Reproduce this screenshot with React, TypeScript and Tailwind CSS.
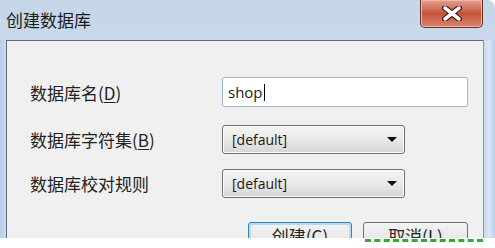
import React from 'react';

const cjk = '"Noto Sans CJK SC", "Noto Sans", sans-serif';
const latin = '"Open Sans", "Noto Sans", sans-serif';

const Label: React.FC<{ text: string; accel?: string }> = ({ text, accel }) => (
  <div className="w-[192px] text-[17px] leading-none text-[#222]" style={{ fontFamily: cjk }}>
    {text}
    {accel && (
      <span>
        (<span className="underline underline-offset-2">{accel}</span>)
      </span>
    )}
  </div>
);

const Combo: React.FC = () => (
  <div className="relative flex h-[29px] w-[183px] items-center rounded-[3px] border border-[#707070] bg-gradient-to-b from-[#f4f4f4] via-[#e9e9e9] to-[#d5d5d5] pl-[9px] shadow-[inset_0_0_0_1px_#fbfbfb]">
    <span className="text-[14px] text-[#1a1a1a]" style={{ fontFamily: latin }}>[default]</span>
    <svg className="absolute right-[7px] top-[11px]" width="10" height="6" viewBox="0 0 10 6">
      <path d="M0 0 L10 0 L5 5 Z" fill="#111" />
    </svg>
  </div>
);

export default function App() {
  return (
    <div className="h-[248px] w-[495px] overflow-hidden bg-white">
      <div className="flex h-[238px] flex-col overflow-hidden rounded-tr-[8px] bg-gradient-to-b from-[#c5d6e9] via-[#d3e0ee] to-[#bfd3e9]">
        {/* title bar */}
        <div className="flex h-[40px] shrink-0 items-start">
          <div className="flex-1 pl-[6px] pt-[10px] text-[17px] leading-[20px] text-[#1b1b1b]" style={{ fontFamily: cjk }}>
            创建数据库
          </div>
          <div className="mr-[12px] flex h-[28px] w-[63px] items-center justify-center rounded-b-[5px] border border-t-0 border-[#6b2c22] bg-gradient-to-b from-[#e3a293] via-[#c6523a] to-[#d68470] shadow-[inset_0_0_0_1px_#efb8a8]">
            <svg width="20" height="15" viewBox="0 0 20 15">
              <path d="M3 2 L17 13 M17 2 L3 13" stroke="#3a1a14" strokeWidth="6" strokeLinecap="round" />
              <path d="M3 2 L17 13 M17 2 L3 13" stroke="#ffffff" strokeWidth="3.5" strokeLinecap="round" />
            </svg>
          </div>
        </div>
        {/* body */}
        <div className="flex min-h-0 flex-1 overflow-hidden">
          <div className="w-[6px] bg-gradient-to-r from-[#b7cfea] to-[#c9dbef]" />
          <div className="flex-1 border-l border-t border-[#5f6b78] bg-[#f0f0f0] pl-[23px] pt-[36px]">
            <div className="flex h-[30px] items-center">
              <Label text="数据库名" accel="D" />
              <div className="flex h-[30px] w-[246px] items-center rounded-[2px] border border-[#9fb9d2] bg-white pl-[5px]">
                <span className="text-[15px] text-[#1a1a1a]" style={{ fontFamily: latin }}>shop</span>
                <span className="ml-[1px] h-[17px] w-[1px] bg-black" />
              </div>
            </div>
            <div className="mt-[18px] flex h-[29px] items-center">
              <Label text="数据库字符集" accel="B" />
              <Combo />
            </div>
            <div className="mt-[15px] flex h-[29px] items-center">
              <Label text="数据库校对规则" />
              <Combo />
            </div>
            <div className="ml-[218px] mt-[24px] flex gap-[11px]">
              <div className="flex h-[28px] w-[104px] items-center justify-center rounded-[3px] border border-[#3c7fb1] bg-gradient-to-b from-[#f3f3f3] to-[#e3e3e3] text-[17px] text-[#222] shadow-[inset_0_0_0_2px_#b4dcf6]" style={{ fontFamily: cjk }}>
                创建(<span className="underline underline-offset-2">C</span>)
              </div>
              <div className="flex h-[28px] w-[105px] items-center justify-center rounded-[3px] border border-[#707070] bg-gradient-to-b from-[#f3f3f3] to-[#e0e0e0] text-[17px] text-[#222]" style={{ fontFamily: cjk }}>
                取消(<span className="underline underline-offset-2">L</span>)
              </div>
            </div>
          </div>
          <div className="w-[12px] border-l border-[#8a99a8] bg-gradient-to-r from-[#c8daee] via-[#dbe7f4] to-[#b8cfe8]" />
        </div>
      </div>
      <div className="ml-[365px] mt-[1px] w-[118px] border-t-[3px] border-dashed border-[#3aa53a]" />
    </div>
  );
}
